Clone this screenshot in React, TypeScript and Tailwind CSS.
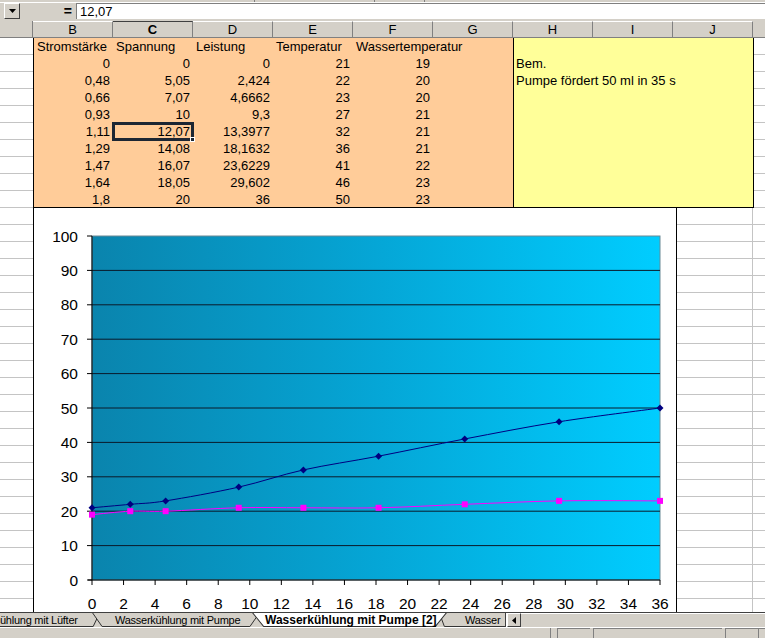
import React from 'react';

const rows = [
  ['0', '0', '0', '21', '19'],
  ['0,48', '5,05', '2,424', '22', '20'],
  ['0,66', '7,07', '4,6662', '23', '20'],
  ['0,93', '10', '9,3', '27', '21'],
  ['1,11', '12,07', '13,3977', '32', '21'],
  ['1,29', '14,08', '18,1632', '36', '21'],
  ['1,47', '16,07', '23,6229', '41', '22'],
  ['1,64', '18,05', '29,602', '46', '23'],
  ['1,8', '20', '36', '50', '23'],
];

const heads = ['Stromstärke', 'Spannung', 'Leistung', 'Temperatur', 'Wassertemperatur'];
const cols = ['B', 'C', 'D', 'E', 'F', 'G', 'H', 'I', 'J'];

// chart geometry (svg coords, origin at page x=34, y=208)
const PL = 58;
const PR = 626;
const PT = 28;
const PB = 372;
const sx = (u: number) => PL + (u * (PR - PL)) / 36;
const sy = (v: number) => PB - (v * (PB - PT)) / 100;

const leistung = [0, 2.424, 4.6662, 9.3, 13.3977, 18.1632, 23.6229, 29.602, 36];
const temp = [21, 22, 23, 27, 32, 36, 41, 46, 50];
const wasser = [19, 20, 20, 21, 21, 21, 22, 23, 23];

function smooth(pts: [number, number][]) {
  let d = `M${pts[0][0]},${pts[0][1]}`;
  for (let i = 0; i < pts.length - 1; i++) {
    const p0 = pts[i - 1] || pts[i];
    const p1 = pts[i];
    const p2 = pts[i + 1];
    const p3 = pts[i + 2] || p2;
    const c1x = p1[0] + (p2[0] - p0[0]) / 6;
    const c1y = p1[1] + (p2[1] - p0[1]) / 6;
    const c2x = p2[0] - (p3[0] - p1[0]) / 6;
    const c2y = p2[1] - (p3[1] - p1[1]) / 6;
    d += ` C${c1x},${c1y} ${c2x},${c2y} ${p2[0]},${p2[1]}`;
  }
  return d;
}

function Chart() {
  const tPts = leistung.map((u, i) => [sx(u), sy(temp[i])] as [number, number]);
  const wPts = leistung.map((u, i) => [sx(u), sy(wasser[i])] as [number, number]);
  const yTicks = [0, 10, 20, 30, 40, 50, 60, 70, 80, 90, 100];
  const xTicks = Array.from({ length: 19 }, (_, i) => i * 2);

  return (
    <svg width="642" height="404" className="block">
      <defs>
        <linearGradient id="plotbg" x1="0" y1="0" x2="1" y2="0">
          <stop offset="0" stopColor="#0a84ad" />
          <stop offset="0.5" stopColor="#05a6d6" />
          <stop offset="1" stopColor="#00cdff" />
        </linearGradient>
      </defs>
      <rect x={PL} y={PT} width={PR - PL} height={PB - PT} fill="url(#plotbg)" stroke="#6b8a96" />
      {yTicks.slice(1, -1).map((v) => (
        <line key={v} x1={PL} x2={PR} y1={sy(v)} y2={sy(v)} stroke="#0a1a2a" strokeWidth="1" />
      ))}
      <line x1={PL} x2={PL} y1={PT} y2={PB} stroke="#000" />
      <line x1={PL - 4} x2={PR} y1={PB} y2={PB} stroke="#000" />
      {yTicks.map((v) => (
        <g key={v}>
          <line x1={PL - 5} x2={PL} y1={sy(v)} y2={sy(v)} stroke="#000" />
          <text
            x={44}
            y={sy(v) + 5.5}
            textAnchor="end"
            fontSize="15.5"
            fontFamily="'Liberation Sans', Arial, sans-serif"
            fill="#000"
          >
            {v}
          </text>
        </g>
      ))}
      {xTicks.map((u) => (
        <g key={u}>
          <line x1={sx(u)} x2={sx(u)} y1={PB} y2={PB + 5} stroke="#000" />
          <text
            x={sx(u)}
            y={401}
            textAnchor="middle"
            fontSize="15.5"
            fontFamily="'Liberation Sans', Arial, sans-serif"
            fill="#000"
          >
            {u}
          </text>
        </g>
      ))}
      <path d={smooth(wPts)} fill="none" stroke="#ff00ff" strokeWidth="1" />
      {wPts.map(([x, y], i) => (
        <rect key={i} x={x - 3} y={y - 3} width="6" height="6" fill="#ff00ff" />
      ))}
      <path d={smooth(tPts)} fill="none" stroke="#000080" strokeWidth="1" />
      {tPts.map(([x, y], i) => (
        <polygon key={i} points={`${x},${y - 3.5} ${x + 3.5},${y} ${x},${y + 3.5} ${x - 3.5},${y}`} fill="#000080" />
      ))}
    </svg>
  );
}

function Tab({
  w,
  active,
  first,
  children,
  pl,
}: {
  w: string;
  active?: boolean;
  first?: boolean;
  children: React.ReactNode;
  pl: string;
}) {
  return (
    <div className={`relative h-full shrink-0 ${w} ${first ? '-ml-[14px]' : '-ml-[8px]'} ${active ? 'z-10' : ''}`}>
      <svg className="absolute inset-0 h-full w-full" preserveAspectRatio="none" viewBox="0 0 100 15">
        <polygon points="0,-1 100,-1 94,14.5 6,14.5" fill={active ? '#ffffff' : '#d4d0c8'} />
        <polyline
          points="0,-1 6,14.5 94,14.5 100,-1"
          fill="none"
          stroke="#303030"
          strokeWidth="1"
          vectorEffect="non-scaling-stroke"
        />
      </svg>
      <span
        className={`relative block whitespace-nowrap leading-[14px] ${pl} ${
          active ? 'text-[12px] font-bold' : 'text-[11px] tracking-[-0.25px]'
        }`}
      >
        {children}
      </span>
    </div>
  );
}

export default function App() {
  return (
    <div className="flex h-[638px] w-[765px] flex-col overflow-hidden bg-[#d4d0c8] font-['Liberation_Sans',Arial,sans-serif] text-black">
      {/* toolbar remnant */}
      <div className="flex h-[3px] border-b border-[#ffffff]">
        <div className="w-[255px] border-r border-[#808080]" />
        <div className="w-[120px] border-r border-[#808080]" />
        <div className="w-[50px] border-r border-[#808080]" />
      </div>

      {/* formula bar */}
      <div className="flex h-[16px] items-stretch">
        <div className="w-[4px]" />
        <div className="flex w-[16px] items-center justify-center border border-b-[#404040] border-l-white border-r-[#404040] border-t-white bg-[#d4d0c8]">
          <svg width="7" height="4" viewBox="0 0 7 4">
            <polygon points="0,0 7,0 3.5,4" fill="#000" />
          </svg>
        </div>
        <div className="flex w-[56px] items-center justify-end pr-[4px] text-[14px] font-bold leading-none">=</div>
        <div className="flex flex-1 items-center border-l border-t border-[#808080] bg-white pl-[3px] text-[13px] leading-none">
          12,07
        </div>
      </div>
      <div className="h-[2px]" />

      {/* column headers */}
      <div className="flex h-[17px] border-b border-[#808080] text-[13px] leading-[16px]">
        <div className="w-[33px] shrink-0 border-r border-[#808080]" />
        {cols.map((c) => (
          <div
            key={c}
            className={`w-[80px] shrink-0 border-r border-[#808080] text-center ${
              c === 'C' ? 'border-t border-t-[#404040] font-bold' : 'border-t border-t-white'
            }`}
          >
            {c}
          </div>
        ))}
        <div className="flex-1" />
      </div>

      {/* sheet */}
      <div className="flex h-[574px] flex-col overflow-hidden bg-white bg-[repeating-linear-gradient(to_bottom,transparent_0px,transparent_16px,#c4c4c4_16px,#c4c4c4_17px)] text-[13px] leading-[17px]">
        <div className="flex h-[170px] shrink-0">
          <div className="w-[33px] shrink-0" />
          <div className="h-[170px] w-[480px] shrink-0 overflow-hidden border-b border-l border-black bg-[#ffcc99]">
            <div className="flex h-[17px]">
              {heads.map((h, i) => (
                <div key={h} className={`${i === 0 ? 'w-[79px]' : 'w-[80px]'} shrink-0 whitespace-nowrap pl-[3px]`}>
                  {h}
                </div>
              ))}
            </div>
            {rows.map((r, ri) => (
              <div key={ri} className="flex h-[17px]">
                {r.map((v, ci) => (
                  <div
                    key={ci}
                    className={`relative ${ci === 0 ? 'w-[79px]' : 'w-[80px]'} shrink-0 pr-[3px] text-right`}
                  >
                    {v}
                    {ri === 4 && ci === 1 && (
                      <div className="absolute -bottom-[1px] -left-[1px] -right-[1px] -top-[1px] border-[3px] border-[#1c2633]">
                        <div className="absolute -bottom-[4px] -right-[4px] h-[5px] w-[5px] border border-white bg-[#1c2633]" />
                      </div>
                    )}
                  </div>
                ))}
              </div>
            ))}
          </div>
          <div className="h-[170px] w-[241px] shrink-0 border-b border-l border-r border-black bg-[#ffff99] pl-[2px]">
            <div className="h-[17px]" />
            <div className="h-[17px] whitespace-nowrap">Bem.</div>
            <div className="h-[17px] whitespace-nowrap">Pumpe fördert 50 ml in 35 s</div>
          </div>
          <div className="flex-1" />
        </div>

        <div className="flex flex-1">
          <div className="w-[33px] shrink-0" />
          <div className="w-[644px] shrink-0 border-l border-r border-black bg-white">
            <Chart />
          </div>
          <div className="w-[76px] shrink-0 border-r border-[#c4c4c4]" />
          <div className="flex-1" />
        </div>
      </div>

      {/* sheet tabs + scrollbar */}
      <div className="flex h-[15px] border-t border-[#404040]">
        <div className="relative flex h-full w-[505px] shrink-0 overflow-hidden">
          <Tab w="w-[114px]" first pl="pl-[14px]">
            ühlung mit Lüfter
          </Tab>
          <Tab w="w-[168px]" pl="pl-[23px]">
            Wasserkühlung mit Pumpe
          </Tab>
          <Tab w="w-[195px]" active pl="pl-[13px]">
            Wasserkühlung mit Pumpe [2]
          </Tab>
          <Tab w="w-[90px]" pl="pl-[26px]">
            Wasser
          </Tab>
        </div>
        <div className="w-[2px] border-l border-r border-l-[#404040] border-r-white" />
        <div className="flex w-[14px] items-center justify-center border border-b-[#404040] border-l-white border-r-[#404040] border-t-white">
          <svg width="4" height="7" viewBox="0 0 4 7">
            <polygon points="4,0 4,7 0,3.5" fill="#000" />
          </svg>
        </div>
        <div className="flex-1 border-t border-white" />
      </div>

      {/* status bar */}
      <div className="flex h-[11px] border-t border-white">
        <div className="w-[550px] shrink-0" />
        <div className="w-[7px] shrink-0 border-l border-[#808080]" />
        <div className="w-[33px] shrink-0 border-l border-t border-[#808080]" />
        <div className="w-[3px] shrink-0" />
        <div className="w-[129px] shrink-0 border-l border-t border-[#808080]" />
        <div className="w-[3px] shrink-0" />
        <div className="w-[33px] shrink-0 border-l border-t border-[#808080]" />
        <div className="flex-1 border-l border-t border-[#808080]" />
      </div>
    </div>
  );
}
